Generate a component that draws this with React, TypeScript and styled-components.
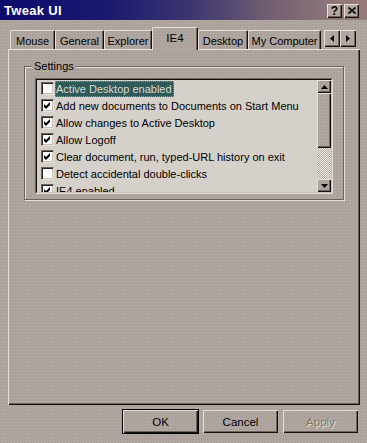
import React from 'react';
import { styled, createGlobalStyle, css } from 'styled-components';

const colors = {
    face: '#b2a89f',
    dots: '#948f99',
    light: '#e8e0d8',
    lightInner: '#c8c0b8',
    shadow: '#6c645c',
    dark: '#141010',
    list: '#d5d1ca',
    select: '#2e5a5a',
    selectText: '#dcd8d2',
};

const GlobalStyle = createGlobalStyle`
    html, body {
        margin: 0;
        padding: 0;
        background: ${colors.face};
    }
    body {
        font-family: "Liberation Sans", Arial, sans-serif;
        font-size: 11px;
        color: #000;
    }
`;

const dither = css`
    background-color: ${colors.face};
    background-image: radial-gradient(circle at 1px 1px, ${colors.dots} 0.5px, transparent 0.8px);
    background-size: 3px 3px;
`;

const raised = css`
    box-shadow:
        inset 1px 1px ${colors.light},
        inset -1px -1px ${colors.dark},
        inset -2px -2px ${colors.shadow};
`;

type Setting = {
    label: string;
    checked: boolean;
};

const settings: Setting[] = [
    { label: 'Active Desktop enabled', checked: false },
    { label: 'Add new documents to Documents on Start Menu', checked: true },
    { label: 'Allow changes to Active Desktop', checked: true },
    { label: 'Allow Logoff', checked: true },
    { label: 'Clear document, run, typed-URL history on exit', checked: true },
    { label: 'Detect accidental double-clicks', checked: false },
    { label: 'IE4 enabled', checked: true },
];

const tabs = [
    { text: 'Mouse', width: 45 },
    { text: 'General', width: 49 },
    { text: 'Explorer', width: 48 },
    { text: 'IE4', width: 46 },
    { text: 'Desktop', width: 50 },
    { text: 'My Computer', width: 73 },
];

const Check = () => (
    <svg width="9" height="9" viewBox="0 0 9 9">
        <path d="M1 3 L3 5 L7 1 L7 4 L3 8 L1 6 Z" fill="#000" />
    </svg>
);

const Arrow = ({ dir }: { dir: 'up' | 'down' | 'left' | 'right' }) => {
    const points = {
        up: '0,4 3.5,0 7,4',
        down: '0,0 7,0 3.5,4',
        left: '4,0 4,7 0,3.5',
        right: '0,0 0,7 4,3.5',
    }[dir];
    const vertical = dir === 'up' || dir === 'down';
    return (
        <svg width={vertical ? 7 : 4} height={vertical ? 4 : 7} viewBox={vertical ? '0 0 7 4' : '0 0 4 7'}>
            <polygon points={points} fill="#000" />
        </svg>
    );
};

export default function App() {
    const [active, setActive] = React.useState('IE4');
    const [items, setItems] = React.useState(settings);
    const [selected, setSelected] = React.useState(0);

    const toggle = (index: number) => {
        setItems(items.map((item, i) => (i === index ? { ...item, checked: !item.checked } : item)));
    };

    return (
        <Window>
            <GlobalStyle />
            <TitleBar>
                <Title>Tweak UI</Title>
                <TitleButtons>
                    <CaptionButton>?</CaptionButton>
                    <CaptionButton>
                        <svg width="8" height="7" viewBox="0 0 8 7">
                            <path d="M0.5 0.5 L7.5 6.5 M7.5 0.5 L0.5 6.5" stroke="#000" strokeWidth="1.6" />
                        </svg>
                    </CaptionButton>
                </TitleButtons>
            </TitleBar>

            <Body>
                <TabStrip>
                    {tabs.map((tab) => (
                        <Tab
                            key={tab.text}
                            $width={tab.width}
                            $active={tab.text === active}
                            onClick={() => setActive(tab.text)}
                        >
                            {tab.text}
                        </Tab>
                    ))}
                    <TabScroller>
                        <ScrollButton><Arrow dir="left" /></ScrollButton>
                        <ScrollButton><Arrow dir="right" /></ScrollButton>
                    </TabScroller>
                </TabStrip>

                <Panel>
                    <GroupBox>
                        <Legend>Settings</Legend>
                        <ListFrame>
                            <ListInner>
                                <Rows>
                                    {items.map((item, index) => (
                                        <Row key={item.label} onClick={() => setSelected(index)}>
                                            <CheckBox onClick={() => toggle(index)}>
                                                {item.checked && <Check />}
                                            </CheckBox>
                                            <Label $selected={index === selected}>{item.label}</Label>
                                        </Row>
                                    ))}
                                </Rows>
                                <ScrollBar>
                                    <ScrollBarButton><Arrow dir="up" /></ScrollBarButton>
                                    <Thumb />
                                    <Track />
                                    <ScrollBarButton><Arrow dir="down" /></ScrollBarButton>
                                </ScrollBar>
                            </ListInner>
                        </ListFrame>
                    </GroupBox>
                </Panel>
            </Body>

            <Footer>
                <Button $default>OK</Button>
                <Button>Cancel</Button>
                <Button disabled>Apply</Button>
            </Footer>
        </Window>
    );
}

const Window = styled.div`
    ${dither}
    width: 367px;
    height: 443px;
    overflow: hidden;
    display: flex;
    flex-direction: column;
`;

const TitleBar = styled.div`
    height: 20px;
    display: flex;
    align-items: center;
    justify-content: space-between;
    padding: 0 8px 0 4px;
    background: linear-gradient(90deg, #0a0a6c 0%, #1c1a6e 30%, #3c3670 52%, #6e5c72 72%, #8e7678 90%, #967c7a 100%);
`;

const Title = styled.span`
    color: #fff;
    font-weight: bold;
    font-size: 13px;
    letter-spacing: 0.3px;
`;

const TitleButtons = styled.div`
    display: flex;
    gap: 2px;
    margin-top: 2px;
`;

const CaptionButton = styled.div`
    ${raised}
    width: 15px;
    height: 14px;
    background: ${colors.face};
    display: flex;
    align-items: center;
    justify-content: center;
    font-weight: bold;
    font-size: 12px;
    padding-bottom: 1px;
    box-sizing: border-box;
`;

const Body = styled.div`
    padding: 7px 0 0 8px;
`;

const TabStrip = styled.div`
    width: 352px;
    height: 22px;
    display: flex;
    align-items: flex-end;
    padding-left: 2px;
    box-sizing: border-box;
`;

const Tab = styled.div<{ $width: number; $active: boolean }>`
    ${dither}
    width: ${({ $width }) => $width}px;
    height: 19px;
    box-sizing: border-box;
    display: flex;
    align-items: center;
    justify-content: center;
    border-top: 1px solid ${colors.light};
    border-left: 1px solid ${colors.light};
    border-right: 1px solid ${colors.dark};
    border-radius: 2px 2px 0 0;
    box-shadow: inset -1px 0 ${colors.shadow};
    padding-top: 1px;
    cursor: default;
    ${({ $active }) => $active && css`
        height: 23px;
        margin-bottom: -1px;
        position: relative;
        z-index: 2;
        padding-bottom: 3px;
        font-size: 11.5px;
    `}
`;

const TabScroller = styled.div`
    display: flex;
    align-self: flex-start;
    margin: 3px 4px 0 auto;
`;

const ScrollButton = styled.div`
    ${raised}
    width: 16px;
    height: 17px;
    background: ${colors.face};
    display: flex;
    align-items: center;
    justify-content: center;
`;

const Panel = styled.div`
    width: 352px;
    height: 356px;
    box-sizing: border-box;
    padding: 17px 0 0 16px;
    box-shadow:
        inset 1px 1px ${colors.light},
        inset -1px -1px ${colors.dark},
        inset -2px -2px ${colors.shadow};
`;

const GroupBox = styled.div`
    position: relative;
    width: 320px;
    box-sizing: border-box;
    padding: 11px 10px 5px 10px;
    border: 1px solid ${colors.shadow};
    box-shadow: inset 1px 1px ${colors.light}, 1px 1px ${colors.light};
`;

const Legend = styled.span`
    ${dither}
    position: absolute;
    top: -7px;
    left: 7px;
    padding: 0 2px;
    line-height: 13px;
`;

const ListFrame = styled.div`
    border-top: 1px solid ${colors.shadow};
    border-left: 1px solid ${colors.shadow};
    border-right: 1px solid ${colors.light};
    border-bottom: 1px solid ${colors.light};
`;

const ListInner = styled.div`
    height: 112px;
    display: flex;
    background: ${colors.list};
    border-top: 1px solid ${colors.dark};
    border-left: 1px solid ${colors.dark};
    border-right: 1px solid ${colors.lightInner};
    border-bottom: 1px solid ${colors.lightInner};
    overflow: hidden;
`;

const Rows = styled.div`
    flex: 1;
    display: flex;
    flex-direction: column;
`;

const Row = styled.div`
    flex: none;
    height: 17px;
    display: flex;
    align-items: center;
    padding-left: 4px;
    white-space: nowrap;
`;

const CheckBox = styled.div`
    width: 13px;
    height: 13px;
    box-sizing: border-box;
    margin-right: 1px;
    background: #fff;
    border-top: 1px solid ${colors.shadow};
    border-left: 1px solid ${colors.shadow};
    border-right: 1px solid ${colors.light};
    border-bottom: 1px solid ${colors.light};
    box-shadow: inset 1px 1px #2a2424, inset -1px -1px ${colors.lightInner};
    display: flex;
    align-items: center;
    justify-content: center;
`;

const Label = styled.span<{ $selected: boolean }>`
    height: 16px;
    line-height: 16px;
    padding: 0 2px 0 1px;
    ${({ $selected }) => $selected && css`
        background: ${colors.select};
        color: ${colors.selectText};
        outline: 1px dotted #9c9484;
        outline-offset: -1px;
    `}
`;

const ScrollBar = styled.div`
    width: 14px;
    display: flex;
    flex-direction: column;
`;

const ScrollBarButton = styled.div`
    ${raised}
    ${dither}
    height: 13px;
    flex: none;
    display: flex;
    align-items: center;
    justify-content: center;
`;

const Thumb = styled.div`
    ${raised}
    ${dither}
    height: 55px;
    flex: none;
`;

const Track = styled.div`
    flex: 1;
    background: repeating-conic-gradient(#ebe7e2 0 25%, #b7afa7 0 50%) 0 0 / 2px 2px;
`;

const Footer = styled.div`
    display: flex;
    justify-content: flex-end;
    gap: 5px;
    padding: 5px 9px 0 0;
`;

const Button = styled.button<{ $default?: boolean }>`
    ${dither}
    width: 75px;
    height: 23px;
    padding: 0;
    border: none;
    font-family: "Liberation Sans", Arial, sans-serif;
    font-size: 11.5px;
    color: #000;
    ${raised}
    ${({ $default }) => $default && css`
        box-shadow:
            0 0 0 1px #000,
            inset 1px 1px ${colors.light},
            inset -1px -1px ${colors.dark},
            inset -2px -2px ${colors.shadow};
    `}
    &:disabled {
        color: #7f776f;
        text-shadow: 1px 1px ${colors.light};
    }
`;
